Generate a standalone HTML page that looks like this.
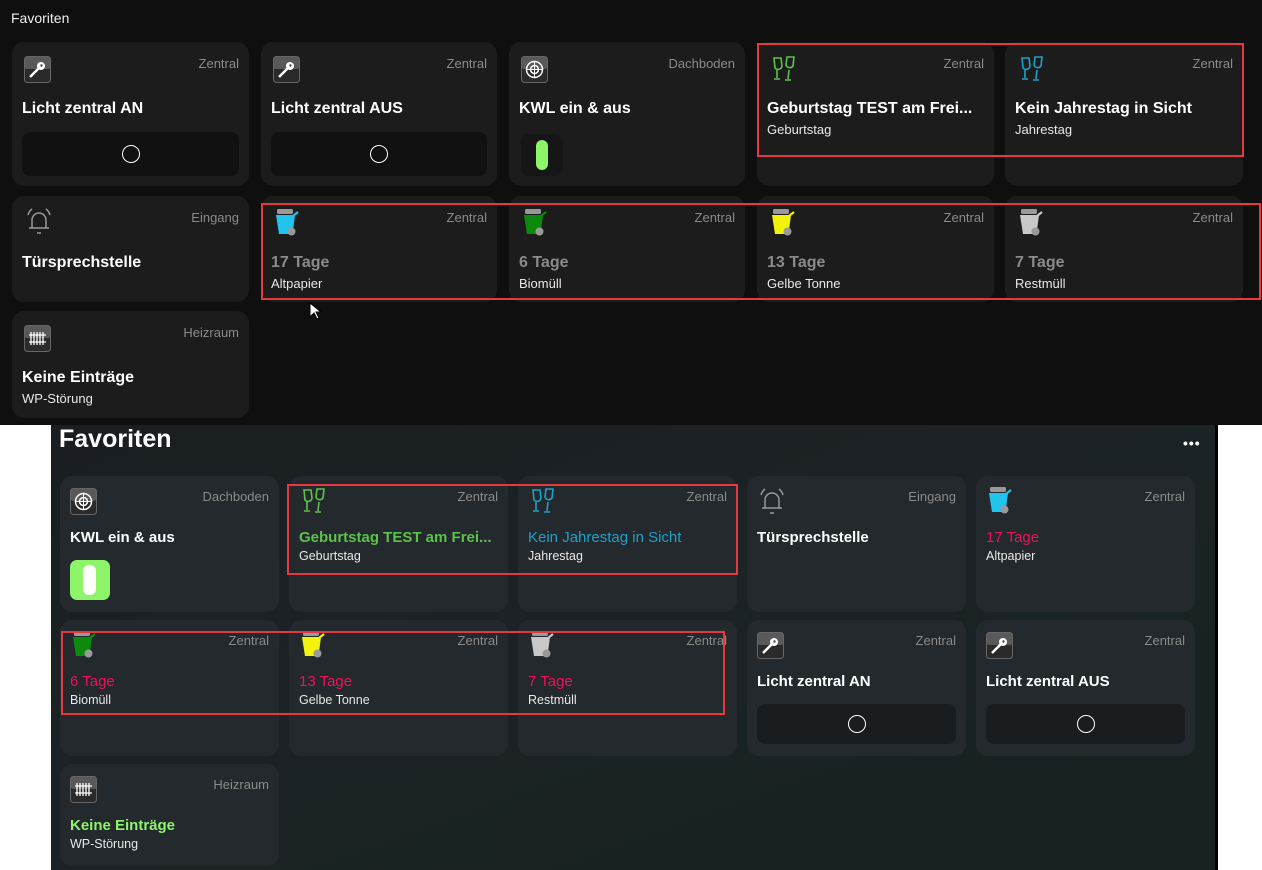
<!DOCTYPE html>
<html><head><meta charset="utf-8"><style>
*{margin:0;padding:0;box-sizing:border-box}
body{width:1262px;height:870px;background:#fff;position:relative;overflow:hidden;font-family:"Liberation Sans",sans-serif}
.top{position:absolute;left:0;top:0;width:1262px;height:425px;background:#0f0f0f}
.bot{position:absolute;left:51px;top:425px;width:1167px;height:445px;background:linear-gradient(160deg,#1a1e21 0%,#1c2326 50%,#16221f 100%);border-right:3px solid #000}
.c{position:absolute;border-radius:12px;background:#1c1c1c}
.b .c{background:#23292c}
.ic{position:absolute;left:12px;top:14px;width:27px;height:27px}
.loc{position:absolute;right:10px;top:14px;font-size:13px;color:#8a8a8a}
.t{position:absolute;left:10px;top:57px;font-size:16px;font-weight:bold;color:#fff;white-space:nowrap}
.s{position:absolute;left:10px;top:80px;font-size:13px;color:#e8e8e8}
.btn{position:absolute;left:10px;right:10px;top:90px;height:44px;border-radius:8px;background:#111}
.btn i{position:absolute;left:50%;top:50%;width:18px;height:18px;margin:-9px;border:1.5px solid #fff;border-radius:50%}
.b .btn{background:#191d1f;top:84px;height:40px}
.b .ic{left:10px;top:12px}
.b .loc{top:13px}
.b .t{top:53px;font-size:15px}
.b .s{top:73px;font-size:12.5px}
.red{position:absolute;border:2px solid #e4393f}
.bn{width:27px;height:29px;top:12px}
</style></head><body>
<svg width="0" height="0" style="position:absolute"><defs>
<symbol id="key" viewBox="0 0 27 27"><rect x="0.5" y="0.5" width="26" height="26" rx="3" fill="#2a2a2a" stroke="#666"/><rect x="1" y="1" width="25" height="12" rx="2" fill="#7a7a7a" opacity=".6"/><circle cx="17" cy="10" r="4" fill="#fff"/><path d="M15 12 L6 21" stroke="#fff" stroke-width="2.5"/><circle cx="17.5" cy="9.5" r="1.2" fill="#444"/></symbol>
<symbol id="fan" viewBox="0 0 27 27"><rect x="0.5" y="0.5" width="26" height="26" rx="3" fill="#2a2a2a" stroke="#666"/><rect x="1" y="1" width="25" height="12" rx="2" fill="#7a7a7a" opacity=".6"/><circle cx="13.5" cy="13.5" r="8" fill="none" stroke="#fff" stroke-width="1.5"/><circle cx="13.5" cy="13.5" r="4" fill="none" stroke="#fff" stroke-width="1.5"/><path d="M13.5 5v17M5.5 13.5h16" stroke="#fff"/></symbol>
<symbol id="rad" viewBox="0 0 27 27"><rect x="0.5" y="0.5" width="26" height="26" rx="3" fill="#2a2a2a" stroke="#666"/><rect x="1" y="1" width="25" height="12" rx="2" fill="#7a7a7a" opacity=".6"/><path d="M7 7v13M10 7v13M13 7v13M16 7v13M19 7v13M5 10h17M5 17h17" stroke="#fff" stroke-width="1.3"/></symbol>
<symbol id="bell" viewBox="0 0 30 30"><path d="M8 22V14a7 7 0 0 1 14 0v8M5 22h20M13 27h4M4 9a11 11 0 0 1 4-6M26 9a11 11 0 0 0-4-6" fill="none" stroke="#999" stroke-width="1.5"/></symbol>
<symbol id="glass" viewBox="0 0 30 30"><path d="M5 4h7l1 8a4 4 0 0 1-7 2zM8 16v8M5 25h6M18 3h7l-1 9a4 4 0 0 1-7-1zM20 16l-1 9M16 26h6" fill="none" stroke="currentColor" stroke-width="1.6"/></symbol>
<symbol id="bin" viewBox="0 0 27 29"><rect x="4" y="1" width="16" height="5" rx="1.5" fill="#999"/><path d="M3 7h19l-2.5 19H6z" fill="currentColor"/><path d="M20 8l5-4" stroke="currentColor" stroke-width="2.2"/><circle cx="18.5" cy="23.5" r="4" fill="#999"/></symbol>
</defs></svg>

<div class="top">
<div style="position:absolute;left:11px;top:10px;font-size:14px;color:#eee">Favoriten</div>

<div class="c" style="left:12px;top:42px;width:237px;height:144px"><svg class="ic"><use href="#key"/></svg><div class="loc">Zentral</div><div class="t" style="top:58px">Licht zentral AN</div><div class="btn"><i></i></div></div>
<div class="c" style="left:261px;top:42px;width:236px;height:144px"><svg class="ic"><use href="#key"/></svg><div class="loc">Zentral</div><div class="t" style="top:58px">Licht zentral AUS</div><div class="btn"><i></i></div></div>
<div class="c" style="left:509px;top:42px;width:236px;height:144px"><svg class="ic"><use href="#fan"/></svg><div class="loc">Dachboden</div><div class="t" style="top:58px">KWL ein &amp; aus</div><div style="position:absolute;left:12px;top:92px;width:42px;height:42px;border-radius:8px;background:#161616"><div style="position:absolute;left:15px;top:6px;width:12px;height:30px;border-radius:6px;background:#8ef56a"></div></div></div>
<div class="c" style="left:757px;top:42px;width:237px;height:144px"><svg class="ic" style="color:#5cc24a;width:30px;height:30px;top:12px"><use href="#glass"/></svg><div class="loc">Zentral</div><div class="t" style="top:58px">Geburtstag TEST am Frei...</div><div class="s" style="top:80px">Geburtstag</div></div>
<div class="c" style="left:1005px;top:42px;width:238px;height:144px"><svg class="ic" style="color:#1fa0c8;width:30px;height:30px;top:12px"><use href="#glass"/></svg><div class="loc">Zentral</div><div class="t" style="top:58px">Kein Jahrestag in Sicht</div><div class="s" style="top:80px">Jahrestag</div></div>

<div class="c" style="left:12px;top:196px;width:237px;height:106px"><svg class="ic" style="width:30px;height:30px;top:10px"><use href="#bell"/></svg><div class="loc">Eingang</div><div class="t" style="top:58px">Türsprechstelle</div></div>
<div class="c" style="left:261px;top:196px;width:236px;height:106px"><svg class="ic bn" style="color:#22c4ee"><use href="#bin"/></svg><div class="loc">Zentral</div><div class="t" style="top:58px;color:#8a8a8a">17 Tage</div><div class="s">Altpapier</div></div>
<div class="c" style="left:509px;top:196px;width:236px;height:106px"><svg class="ic bn" style="color:#0b8a0b"><use href="#bin"/></svg><div class="loc">Zentral</div><div class="t" style="top:58px;color:#8a8a8a">6 Tage</div><div class="s">Biomüll</div></div>
<div class="c" style="left:757px;top:196px;width:237px;height:106px"><svg class="ic bn" style="color:#f2f20a"><use href="#bin"/></svg><div class="loc">Zentral</div><div class="t" style="top:58px;color:#8a8a8a">13 Tage</div><div class="s">Gelbe Tonne</div></div>
<div class="c" style="left:1005px;top:196px;width:238px;height:106px"><svg class="ic bn" style="color:#c8c8c8"><use href="#bin"/></svg><div class="loc">Zentral</div><div class="t" style="top:58px;color:#8a8a8a">7 Tage</div><div class="s">Restmüll</div></div>

<div class="c" style="left:12px;top:311px;width:237px;height:107px"><svg class="ic"><use href="#rad"/></svg><div class="loc">Heizraum</div><div class="t" style="top:58px">Keine Einträge</div><div class="s">WP-Störung</div></div>

<div class="red" style="left:757px;top:43px;width:487px;height:114px"></div>
<div class="red" style="left:261px;top:203px;width:1000px;height:97px"></div>
<svg style="position:absolute;left:309px;top:302px" width="12" height="18"><path d="M1 1v14l4-4 3 6 2-1-3-6h5z" fill="#fff" stroke="#000"/></svg>
</div>

<div class="bot b">
<div style="position:absolute;left:8px;top:0px;font-size:25px;font-weight:bold;color:#fff">Favoriten</div>
<div style="position:absolute;left:1132px;top:10px;color:#fff;font-size:14px;letter-spacing:1px;font-weight:bold">•••</div>
</div>
<div class="b">
<div class="c" style="left:60px;top:476px;width:219px;height:136px"><svg class="ic"><use href="#fan"/></svg><div class="loc">Dachboden</div><div class="t">KWL ein &amp; aus</div><div style="position:absolute;left:10px;top:84px;width:40px;height:40px;border-radius:7px;background:#8ef56a"><div style="position:absolute;left:13px;top:5px;width:13px;height:30px;border-radius:6px;background:#fff"></div></div></div>
<div class="c" style="left:289px;top:476px;width:219px;height:136px"><svg class="ic" style="color:#5cc24a;width:30px;height:30px;top:10px"><use href="#glass"/></svg><div class="loc">Zentral</div><div class="t" style="color:#5cc24a">Geburtstag TEST am Frei...</div><div class="s">Geburtstag</div></div>
<div class="c" style="left:518px;top:476px;width:219px;height:136px"><svg class="ic" style="color:#1fa0c8;width:30px;height:30px;top:10px"><use href="#glass"/></svg><div class="loc">Zentral</div><div class="t" style="color:#1fa0c8;font-weight:normal">Kein Jahrestag in Sicht</div><div class="s">Jahrestag</div></div>
<div class="c" style="left:747px;top:476px;width:219px;height:136px"><svg class="ic" style="width:30px;height:30px;top:10px"><use href="#bell"/></svg><div class="loc">Eingang</div><div class="t">Türsprechstelle</div></div>
<div class="c" style="left:976px;top:476px;width:219px;height:136px"><svg class="ic bn" style="color:#22c4ee;top:10px"><use href="#bin"/></svg><div class="loc">Zentral</div><div class="t" style="color:#f0105a;font-weight:normal">17 Tage</div><div class="s">Altpapier</div></div>

<div class="c" style="left:60px;top:620px;width:219px;height:136px"><svg class="ic bn" style="color:#0b8a0b;top:10px"><use href="#bin"/></svg><div class="loc">Zentral</div><div class="t" style="color:#f0105a;font-weight:normal">6 Tage</div><div class="s">Biomüll</div></div>
<div class="c" style="left:289px;top:620px;width:219px;height:136px"><svg class="ic bn" style="color:#f2f20a;top:10px"><use href="#bin"/></svg><div class="loc">Zentral</div><div class="t" style="color:#f0105a;font-weight:normal">13 Tage</div><div class="s">Gelbe Tonne</div></div>
<div class="c" style="left:518px;top:620px;width:219px;height:136px"><svg class="ic bn" style="color:#c8c8c8;top:10px"><use href="#bin"/></svg><div class="loc">Zentral</div><div class="t" style="color:#f0105a;font-weight:normal">7 Tage</div><div class="s">Restmüll</div></div>
<div class="c" style="left:747px;top:620px;width:219px;height:136px"><svg class="ic"><use href="#key"/></svg><div class="loc">Zentral</div><div class="t">Licht zentral AN</div><div class="btn"><i></i></div></div>
<div class="c" style="left:976px;top:620px;width:219px;height:136px"><svg class="ic"><use href="#key"/></svg><div class="loc">Zentral</div><div class="t">Licht zentral AUS</div><div class="btn"><i></i></div></div>

<div class="c" style="left:60px;top:764px;width:219px;height:102px"><svg class="ic"><use href="#rad"/></svg><div class="loc">Heizraum</div><div class="t" style="color:#8ef56a">Keine Einträge</div><div class="s">WP-Störung</div></div>

<div class="red" style="left:287px;top:484px;width:451px;height:91px"></div>
<div class="red" style="left:61px;top:631px;width:664px;height:84px"></div>
</div>
</body></html>
